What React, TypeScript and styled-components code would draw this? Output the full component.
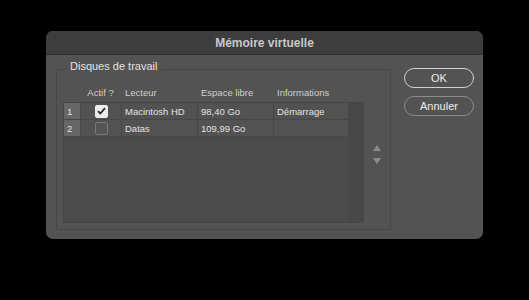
import React from "react";
import styled, { createGlobalStyle } from "styled-components";

const GlobalStyle = createGlobalStyle`
  html, body {
    margin: 0;
    padding: 0;
    background: #000;
  }
  body {
    font-family: "Liberation Sans", Arial, sans-serif;
  }
`;

const COLS = "17px 41px 76px 76px 75px 15px";

const Page = styled.div`
  width: 529px;
  height: 300px;
  display: flex;
  justify-content: center;
  padding-top: 31px;
  box-sizing: border-box;
`;

const Dialog = styled.div`
  width: 437px;
  height: 208px;
  background: #535353;
  border-radius: 7px;
  overflow: hidden;
  display: flex;
  flex-direction: column;
`;

const TitleBar = styled.div`
  height: 23px;
  background: #3d3d3d;
  border-bottom: 1px solid #313131;
  display: flex;
  align-items: center;
  justify-content: center;
  color: #c8c8c8;
  font-size: 12px;
  font-weight: bold;
`;

const Body = styled.div`
  flex: 1;
  display: flex;
  align-items: flex-start;
  padding: 5px 9px 0 10px;
  gap: 13px;
`;

const GroupBox = styled.fieldset`
  margin: 0;
  padding: 4px 0 6px 6px;
  min-width: 0;
  width: 336px;
  height: 170px;
  box-sizing: border-box;
  border: 1px solid #474747;
  border-radius: 1px;
  display: flex;
`;

const Legend = styled.legend`
  margin-left: 3px;
  padding: 0 4px 6px;
  font-size: 11px;
  line-height: 13px;
  color: #e2e2e2;
`;

const TableArea = styled.div`
  width: 300px;
  display: flex;
  flex-direction: column;
`;

const HeaderRow = styled.div`
  display: grid;
  grid-template-columns: ${COLS};
  height: 19px;
  align-items: center;
  font-size: 9.5px;
  color: #cfcfcf;
`;

const HeaderCell = styled.div<{ $center?: boolean }>`
  padding-left: ${(p) => (p.$center ? "0" : "4px")};
  text-align: ${(p) => (p.$center ? "center" : "left")};
  white-space: nowrap;
`;

const Table = styled.div`
  flex: 1;
  background: #4b4b4b;
  border: 1px solid #454545;
  display: flex;
  flex-direction: column;
`;

const Row = styled.div`
  display: grid;
  grid-template-columns: ${COLS};
  height: 16px;
  border-bottom: 1px solid #474747;
  background: #525252;
`;

const NumCell = styled.div`
  background: #666;
  color: #e4e4e4;
  font-size: 9.5px;
  padding-left: 3px;
  display: flex;
  align-items: center;
  border-right: 1px solid #4a4a4a;
`;

const Cell = styled.div`
  color: #e2e2e2;
  font-size: 9.5px;
  padding-left: 3px;
  display: flex;
  align-items: center;
  border-right: 1px solid #464646;
  white-space: nowrap;
`;

const CheckCell = styled.div`
  display: flex;
  align-items: center;
  justify-content: center;
  border-right: 1px solid #464646;
`;

const Box = styled.div<{ $checked: boolean }>`
  width: 11px;
  height: 11px;
  border-radius: 2px;
  background: ${(p) => (p.$checked ? "#ececec" : "#555")};
  border: 1px solid ${(p) => (p.$checked ? "#ececec" : "#787878")};
  display: flex;
  align-items: center;
  justify-content: center;
`;

const Stripe = styled.div`
  background: #484848;
`;

const Filler = styled.div`
  flex: 1;
  display: grid;
  grid-template-columns: ${COLS};
`;

const ArrowCol = styled.div`
  width: 30px;
  display: flex;
  flex-direction: column;
  align-items: center;
  padding-top: 62px;
  gap: 7px;
`;

const Buttons = styled.div`
  display: flex;
  flex-direction: column;
  gap: 8px;
  margin-top: 8px;
`;

const Button = styled.button<{ $primary?: boolean }>`
  width: 70px;
  height: 20px;
  border-radius: 10px;
  background: transparent;
  border: 1px solid ${(p) => (p.$primary ? "#d0d0d0" : "#8c8c8c")};
  color: #ececec;
  font-family: "Liberation Sans", Arial, sans-serif;
  font-size: 11px;
  padding: 0;
`;

const Check = () => (
  <svg width="9" height="8" viewBox="0 0 9 8">
    <path d="M1 4.2 L3.4 6.5 L8 1.2" fill="none" stroke="#2a2a2a" strokeWidth="1.8" />
  </svg>
);

const Arrow = ({ up }: { up?: boolean }) => (
  <svg width="8" height="6" viewBox="0 0 8 6">
    <path d={up ? "M4 0 L8 6 L0 6 Z" : "M0 0 L8 0 L4 6 Z"} fill="#8a8a8a" />
  </svg>
);

const disks = [
  { n: 1, on: true, name: "Macintosh HD", free: "98,40 Go", info: "Démarrage" },
  { n: 2, on: false, name: "Datas", free: "109,99 Go", info: "" },
];

export default function App() {
  return (
    <>
      <GlobalStyle />
      <Page>
        <Dialog>
          <TitleBar>Mémoire virtuelle</TitleBar>
          <Body>
            <GroupBox>
              <Legend>Disques de travail</Legend>
              <TableArea>
                <HeaderRow>
                  <div />
                  <HeaderCell $center>Actif ?</HeaderCell>
                  <HeaderCell>Lecteur</HeaderCell>
                  <HeaderCell>Espace libre</HeaderCell>
                  <HeaderCell>Informations</HeaderCell>
                  <div />
                </HeaderRow>
                <Table>
                  {disks.map((d) => (
                    <Row key={d.n}>
                      <NumCell>{d.n}</NumCell>
                      <CheckCell>
                        <Box $checked={d.on}>{d.on && <Check />}</Box>
                      </CheckCell>
                      <Cell>{d.name}</Cell>
                      <Cell>{d.free}</Cell>
                      <Cell>{d.info}</Cell>
                      <Stripe />
                    </Row>
                  ))}
                  <Filler>
                    <div />
                    <div />
                    <div />
                    <div />
                    <div />
                    <Stripe />
                  </Filler>
                </Table>
              </TableArea>
              <ArrowCol>
                <Arrow up />
                <Arrow />
              </ArrowCol>
            </GroupBox>
            <Buttons>
              <Button $primary>OK</Button>
              <Button>Annuler</Button>
            </Buttons>
          </Body>
        </Dialog>
      </Page>
    </>
  );
}
